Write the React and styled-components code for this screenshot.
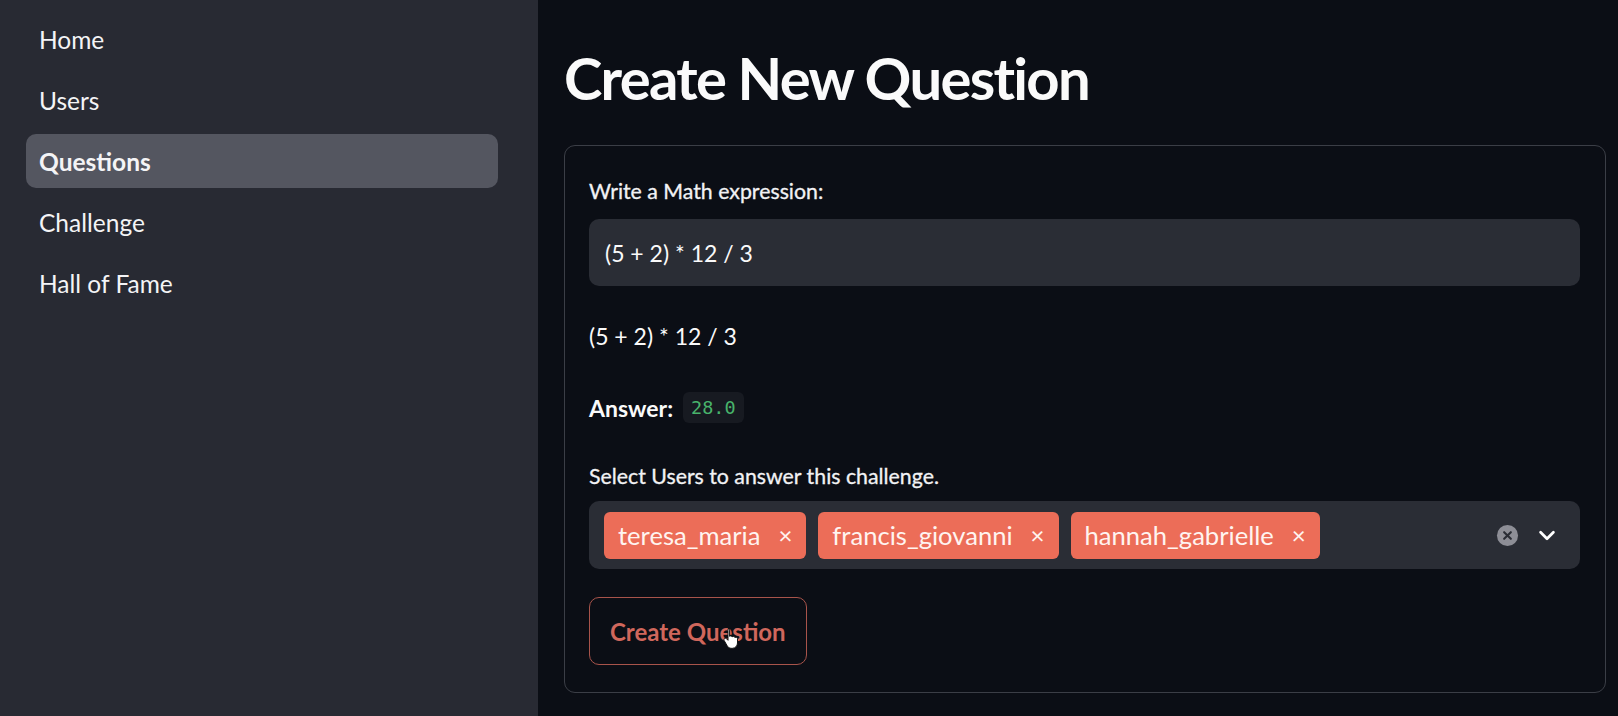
import styled, { createGlobalStyle } from "styled-components";

const GlobalStyle = createGlobalStyle`
  html, body {
    margin: 0;
    padding: 0;
    background: #0b0e15;
  }
  * {
    box-sizing: border-box;
  }
`;

const Page = styled.div`
  display: flex;
  width: 1618px;
  height: 716px;
  overflow: hidden;
  font-family: "Lato", "Open Sans", sans-serif;
  color: #fafafa;
`;

const Sidebar = styled.nav`
  width: 538px;
  flex-shrink: 0;
  background: #282a33;
  padding: 12px 40px 0 26px;
  display: flex;
  flex-direction: column;
  gap: 7px;
`;

const NavItem = styled.div`
  height: 54px;
  display: flex;
  align-items: center;
  padding-left: 13px;
  border-radius: 10px;
  font-size: 24.5px;
  font-weight: ${(p) => (p.$active ? 700 : 400)};
  background: ${(p) => (p.$active ? "#545660" : "transparent")};
  color: #f4f4f6;
`;

const Main = styled.main`
  flex: 1;
  padding: 36px 12px 0 26px;
  display: flex;
  flex-direction: column;
`;

const Title = styled.h1`
  margin: 0 0 25px;
  font-size: 58px;
  line-height: 84px;
  font-weight: 700;
  letter-spacing: -1.7px;
`;

const Card = styled.section`
  border: 1px solid #3b3e46;
  border-radius: 11px;
  height: 548px;
  padding: 30px 25px 0 24px;
  display: flex;
  flex-direction: column;
`;

const Label = styled.div`
  font-size: 21.3px;
  line-height: 30px;
  font-weight: 400;
  color: #f2f2f4;
  -webkit-text-stroke: 0.3px #f2f2f4;
  margin-top: ${(p) => p.$top || 0}px;
  margin-bottom: ${(p) => p.$gap}px;
`;

const Input = styled.div`
  height: 67px;
  background: #2a2d35;
  border-radius: 10px;
  display: flex;
  align-items: center;
  padding-left: 16px;
  font-size: 23px;
`;

const Markdown = styled.div`
  font-size: 23px;
  line-height: 34px;
  margin-top: ${(p) => p.$top}px;
`;

const AnswerRow = styled.div`
  display: flex;
  align-items: center;
  gap: 10px;
  margin-top: 39px;
  font-size: 23px;
  font-weight: 700;
`;

const Code = styled.code`
  font-family: "DejaVu Sans Mono", "Liberation Mono", monospace;
  font-size: 18.5px;
  font-weight: 400;
  color: #48b36b;
  background: #171a21;
  border-radius: 6px;
  padding: 5px 8px;
`;

const Select = styled.div`
  height: 68px;
  background: #2a2d35;
  border-radius: 10px;
  display: flex;
  align-items: center;
  padding: 0 22px 0 15px;
  gap: 12px;
`;

const Tag = styled.div`
  height: 47px;
  background: #ec6d58;
  border-radius: 6px;
  display: flex;
  align-items: center;
  gap: 18px;
  padding: 0 14px 0 14px;
  font-size: 25.6px;
  color: #fff4f0;
`;

const TagClose = styled.span`
  font-size: 24px;
  line-height: 1;
`;

const Spacer = styled.div`
  flex: 1;
`;

const IconBox = styled.div`
  display: flex;
  align-items: center;
  gap: 17px;
`;

const ButtonWrap = styled.div`
  position: relative;
  margin-top: 28px;
  align-self: flex-start;
`;

const Button = styled.button`
  height: 68px;
  padding: 0 20px;
  background: transparent;
  border: 1.5px solid #a8544b;
  border-radius: 10px;
  color: #d0675c;
  font-family: inherit;
  font-size: 24px;
  font-weight: 700;
`;

const Cursor = styled.svg`
  position: absolute;
  left: 134px;
  top: 30px;
`;

const users = ["teresa_maria", "francis_giovanni", "hannah_gabrielle"];
const pages = ["Home", "Users", "Questions", "Challenge", "Hall of Fame"];

export default function App() {
  return (
    <>
      <GlobalStyle />
      <Page>
        <Sidebar>
          {pages.map((p) => (
            <NavItem key={p} $active={p === "Questions"}>
              {p}
            </NavItem>
          ))}
        </Sidebar>
        <Main>
          <Title>Create New Question</Title>
          <Card>
            <Label $gap={13}>Write a Math expression:</Label>
            <Input>(5 + 2) * 12 / 3</Input>
            <Markdown $top={33}>(5 + 2) * 12 / 3</Markdown>
            <AnswerRow>
              Answer: <Code>28.0</Code>
            </AnswerRow>
            <Label $top={38} $gap={10}>
              Select Users to answer this challenge.
            </Label>
            <Select>
              {users.map((u) => (
                <Tag key={u}>
                  {u}
                  <TagClose>×</TagClose>
                </Tag>
              ))}
              <Spacer />
              <IconBox>
                <svg width="23" height="23" viewBox="0 0 24 24">
                  <circle cx="12" cy="12" r="11" fill="#8d8e96" />
                  <path d="M8.5 8.5l7 7M15.5 8.5l-7 7" stroke="#2a2d35" strokeWidth="2.2" strokeLinecap="round" />
                </svg>
                <svg width="22" height="22" viewBox="0 0 24 24">
                  <path d="M5 9l7 7 7-7" fill="none" stroke="#ffffff" strokeWidth="3" strokeLinecap="round" strokeLinejoin="round" />
                </svg>
              </IconBox>
            </Select>
            <ButtonWrap>
              <Button>Create Question</Button>
              <Cursor width="18" height="22" viewBox="0 0 18 22">
                <path
                  d="M5 1.5c.9 0 1.6.7 1.6 1.6v6.2c.3-.3.8-.4 1.2-.4.7 0 1.2.4 1.4 1 .3-.3.7-.5 1.2-.5.7 0 1.300.5 1.5 1.1.3-.2.6-.3 1-.3.9 0 1.6.7 1.6 1.6v4.2c0 2.9-2.2 5.3-5.1 5.3H8.3c-1.6 0-3-.8-3.9-2.1L1.2 13.6c-.5-.7-.3-1.7.4-2.1.6-.4 1.4-.3 1.9.2l1.5 1.6V3.1c0-.9.7-1.6 1.6-1.6z"
                  fill="#ffffff"
                  stroke="#111"
                  strokeWidth="1"
                />
              </Cursor>
            </ButtonWrap>
          </Card>
        </Main>
      </Page>
    </>
  );
}
